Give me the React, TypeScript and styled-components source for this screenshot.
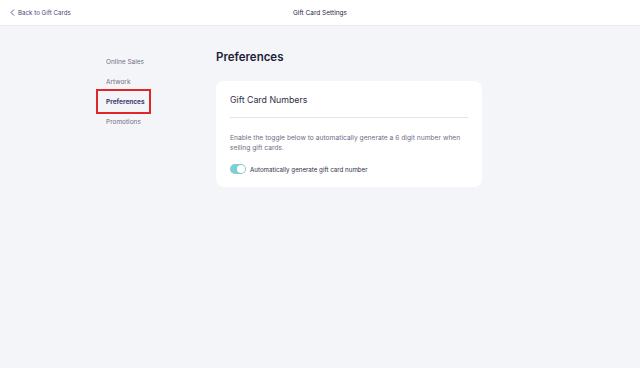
import React from 'react';
import styled, { createGlobalStyle } from 'styled-components';

const GlobalStyle = createGlobalStyle`
  html, body {
    margin: 0;
    padding: 0;
    background: #f4f5f8;
    font-family: Inter, "Open Sans", sans-serif;
  }
`;

const Page = styled.div`
  width: 640px;
  min-height: 368px;
  background: #f4f5f8;
`;

const Header = styled.header`
  position: relative;
  display: flex;
  align-items: center;
  justify-content: center;
  height: 25px;
  background: #fff;
  border-bottom: 1px solid #e8e8ee;
`;

const BackLink = styled.a`
  position: absolute;
  left: 10px;
  top: 0;
  bottom: 0;
  display: flex;
  align-items: center;
  gap: 3px;
  font-size: 6.2px;
  color: #4a4780;
  text-decoration: none;
`;

const HeaderTitle = styled.h1`
  margin: 0;
  font-size: 6.5px;
  font-weight: 400;
  color: #2a2940;
`;

const Body = styled.div`
  display: flex;
  padding: 25px 0 0 96px;
`;

const Nav = styled.nav`
  display: flex;
  flex-direction: column;
  width: 120px;
`;

const NavItem = styled.div<{ active?: boolean }>`
  display: flex;
  align-items: center;
  width: 55px;
  height: 20px;
  box-sizing: border-box;
  padding: 1px 0 0 8px;
  font-size: 6.5px;
  font-weight: ${(p) => (p.active ? 700 : 400)};
  color: ${(p) => (p.active ? '#3b3970' : '#707082')};
  border: ${(p) => (p.active ? '2px solid #e0262b' : '2px solid transparent')};
  ${(p) => (p.active ? 'height: 25px; padding-top: 0; margin: -2px 0 -3px;' : '')}
`;

const Main = styled.main`
  width: 266px;
`;

const Title = styled.h2`
  margin: 0 0 16px;
  height: 14px;
  font-size: 11.5px;
  line-height: 12px;
  font-weight: 600;
  color: #1e1d38;
`;

const Card = styled.section`
  background: #fff;
  border-radius: 8px;
  padding: 14px 14px 0;
  height: 106px;
  box-sizing: border-box;
`;

const CardTitle = styled.h3`
  margin: 0;
  padding-bottom: 12px;
  font-size: 8.8px;
  line-height: 10px;
  font-weight: 400;
  color: #2f2e45;
  border-bottom: 1px solid #e3e3ea;
`;

const Desc = styled.p`
  margin: 15px 0 0;
  max-width: 236px;
  font-size: 6.7px;
  line-height: 10px;
  color: #6f6e86;
`;

const ToggleRow = styled.div`
  display: flex;
  align-items: center;
  gap: 4px;
  margin-top: 11px;
  font-size: 6.2px;
  color: #2f2e45;
`;

const Switch = styled.span`
  position: relative;
  display: inline-block;
  width: 16px;
  height: 10px;
  border-radius: 5px;
  background: #7fcfcf;

  &::after {
    content: '';
    position: absolute;
    right: 1px;
    top: 1px;
    width: 8px;
    height: 8px;
    border-radius: 50%;
    background: #fff;
  }
`;

const App: React.FC = () => (
  <Page>
    <GlobalStyle />
    <Header>
      <BackLink href="#">
        <svg width="5" height="7" viewBox="0 0 5 7">
          <path d="M4 0.5 L1 3.5 L4 6.5" fill="none" stroke="#4a4780" strokeWidth="0.9" />
        </svg>
        Back to Gift Cards
      </BackLink>
      <HeaderTitle>Gift Card Settings</HeaderTitle>
    </Header>
    <Body>
      <Nav>
        <NavItem>Online Sales</NavItem>
        <NavItem>Artwork</NavItem>
        <NavItem active>Preferences</NavItem>
        <NavItem>Promotions</NavItem>
      </Nav>
      <Main>
        <Title>Preferences</Title>
        <Card>
          <CardTitle>Gift Card Numbers</CardTitle>
          <Desc>
            Enable the toggle below to automatically generate a 6 digit number when selling gift
            cards.
          </Desc>
          <ToggleRow>
            <Switch />
            Automatically generate gift card number
          </ToggleRow>
        </Card>
      </Main>
    </Body>
  </Page>
);

export default App;
